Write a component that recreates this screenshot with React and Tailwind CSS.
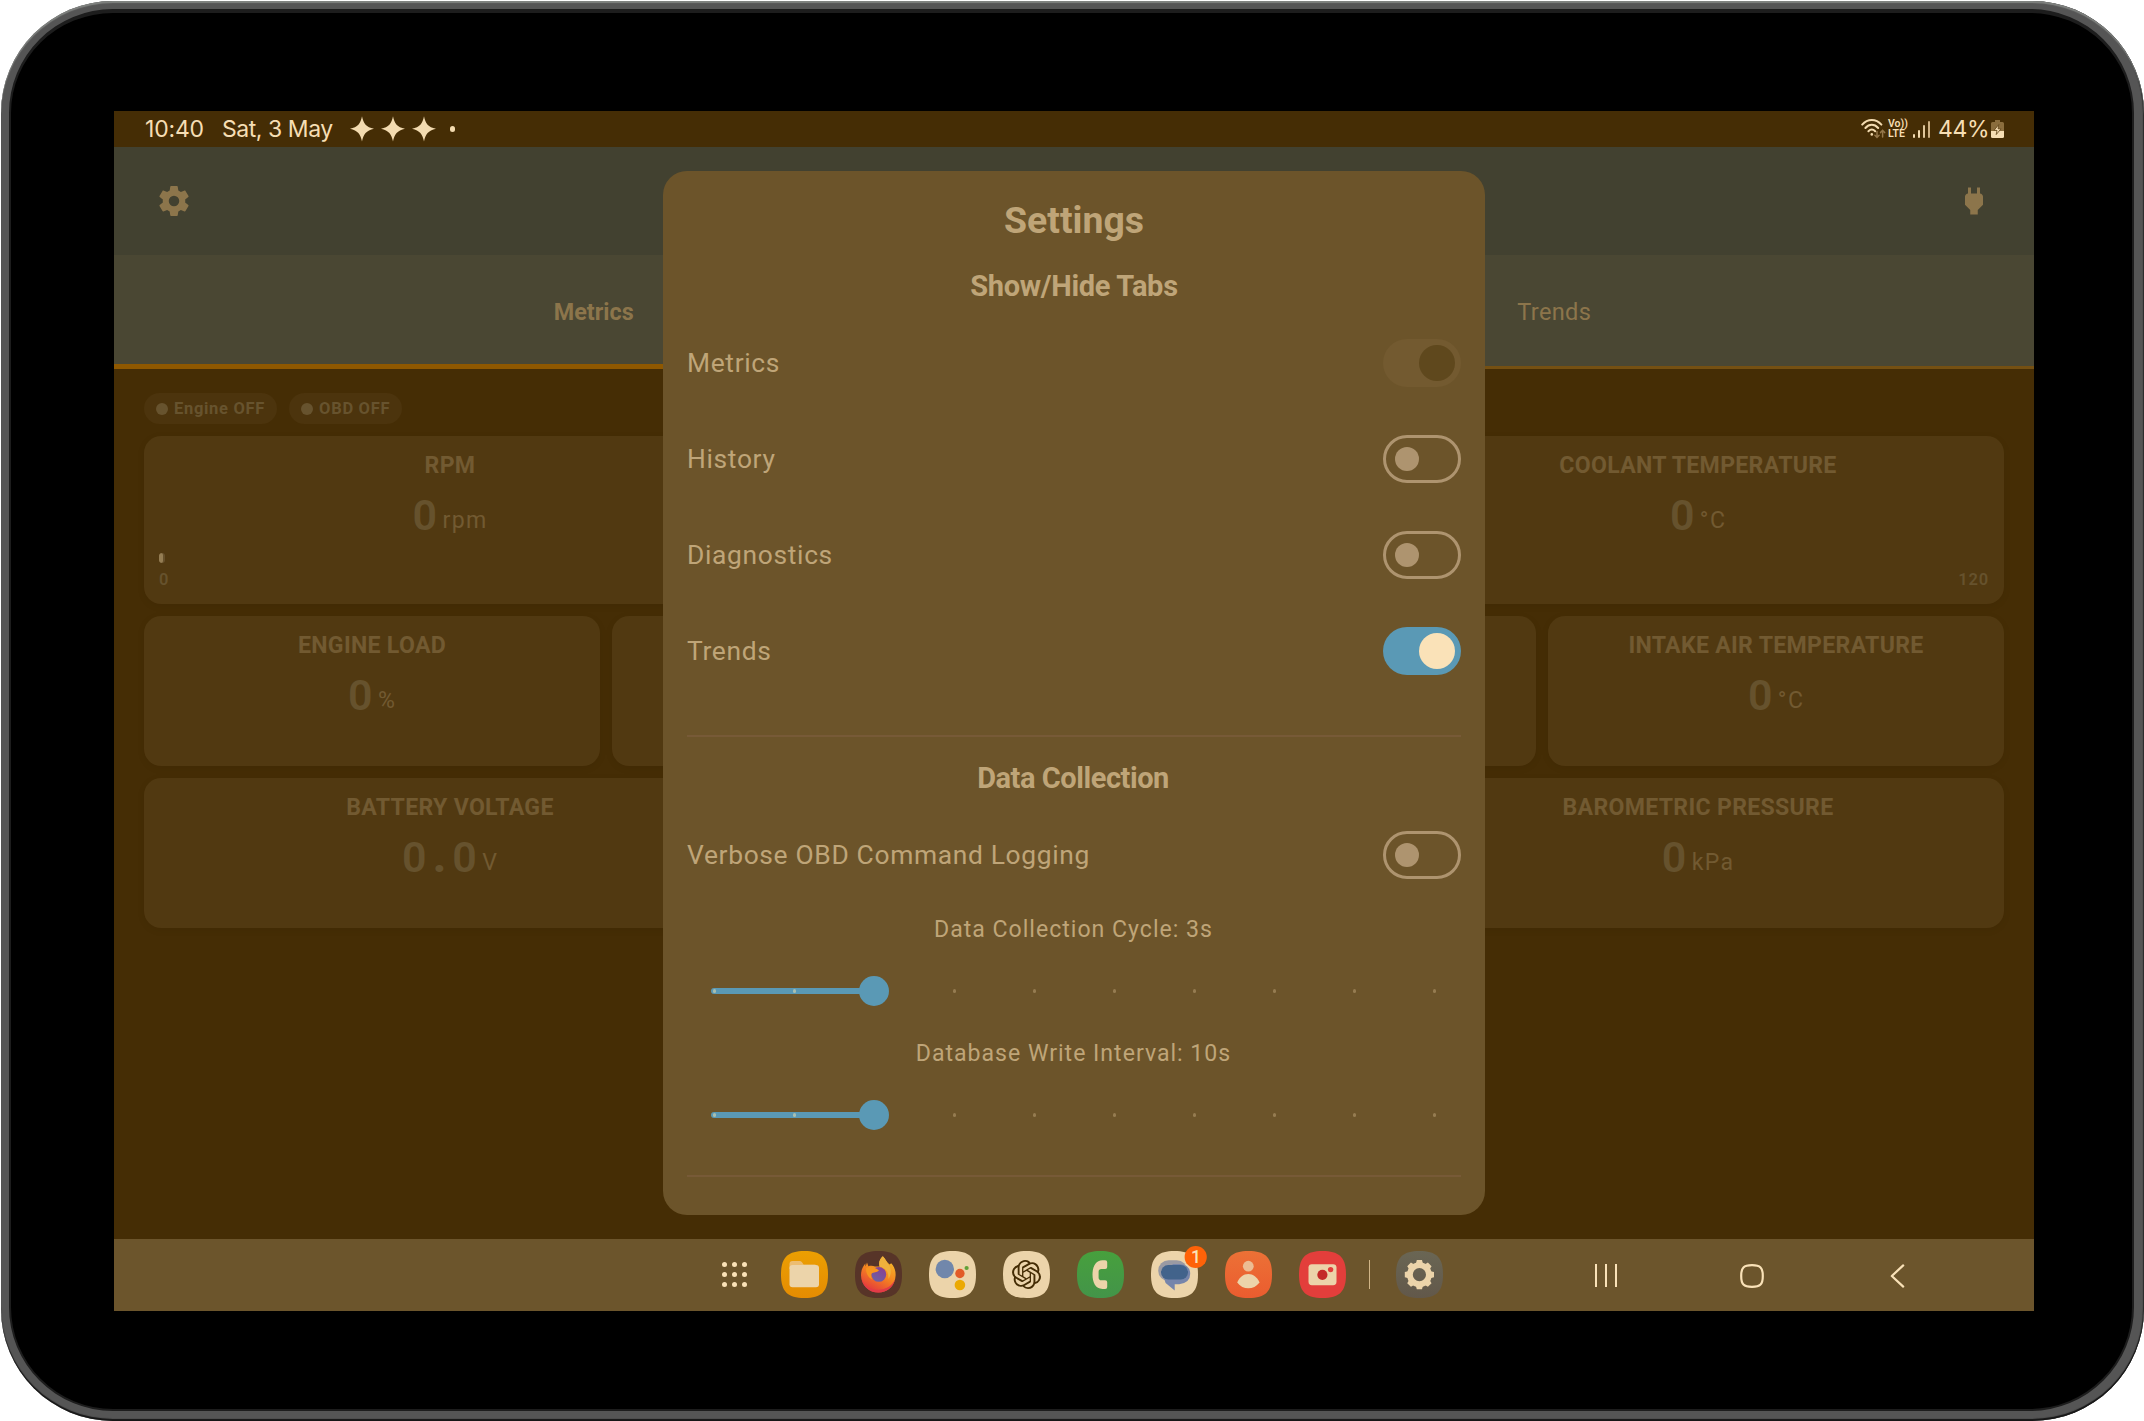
import React from "react";

const COG =
  "M12,15.5A3.5,3.5 0 0,1 8.5,12A3.5,3.5 0 0,1 12,8.5A3.5,3.5 0 0,1 15.5,12A3.5,3.5 0 0,1 12,15.5M19.43,12.97C19.47,12.65 19.5,12.33 19.5,12C19.5,11.67 19.47,11.34 19.43,11L21.54,9.37C21.73,9.22 21.78,8.95 21.66,8.73L19.66,5.27C19.54,5.05 19.27,4.96 19.05,5.05L16.56,6.05C16.04,5.66 15.5,5.32 14.87,5.07L14.5,2.42C14.46,2.18 14.25,2 14,2H10C9.75,2 9.54,2.18 9.5,2.42L9.13,5.07C8.5,5.32 7.96,5.66 7.44,6.05L4.95,5.05C4.73,4.96 4.46,5.05 4.34,5.27L2.34,8.73C2.21,8.95 2.27,9.22 2.46,9.37L4.57,11C4.53,11.34 4.5,11.67 4.5,12C4.5,12.33 4.53,12.65 4.57,12.97L2.46,14.63C2.27,14.78 2.21,15.05 2.34,15.27L4.34,18.73C4.46,18.95 4.73,19.03 4.95,18.95L7.44,17.94C7.96,18.34 8.5,18.68 9.13,18.93L9.5,21.58C9.54,21.82 9.75,22 10,22H14C14.25,22 14.46,21.82 14.5,21.58L14.87,18.93C15.5,18.67 16.04,18.34 16.56,17.94L19.05,18.95C19.27,19.03 19.54,18.95 19.66,18.73L21.66,15.27C21.78,15.05 21.73,14.78 21.54,14.63L19.43,12.97Z";

const PLUG =
  "M16,7V3H14V7H10V3H8V7H8C7,7 6,8 6,9V14.5L9.5,18V21H14.5V18L18,14.5V9C18,8 17,7 16,7Z";

const KNOT =
  "M22.2819 9.8211a5.9847 5.9847 0 0 0-.5157-4.9108 6.0462 6.0462 0 0 0-6.5098-2.9A6.0651 6.0651 0 0 0 4.9807 4.1818a5.9847 5.9847 0 0 0-3.9977 2.9 6.0462 6.0462 0 0 0 .7427 7.0966 5.98 5.98 0 0 0 .511 4.9107 6.051 6.051 0 0 0 6.5146 2.9001A5.9847 5.9847 0 0 0 13.2599 24a6.0557 6.0557 0 0 0 5.7718-4.2058 5.9894 5.9894 0 0 0 3.9977-2.9001 6.0557 6.0557 0 0 0-.7475-7.0729zm-9.022 12.6081a4.4755 4.4755 0 0 1-2.8764-1.0408l.1419-.0804 4.7783-2.7582a.7948.7948 0 0 0 .3927-.6813v-6.7369l2.02 1.1686a.071.071 0 0 1 .038.052v5.5826a4.504 4.504 0 0 1-4.4945 4.4944zm-9.6607-4.1254a4.4708 4.4708 0 0 1-.5346-3.0137l.142.0852 4.783 2.7582a.7712.7712 0 0 0 .7806 0l5.8428-3.3685v2.3324a.0804.0804 0 0 1-.0332.0615L9.74 19.9502a4.4992 4.4992 0 0 1-6.1408-1.6464zM2.3408 7.8956a4.485 4.485 0 0 1 2.3655-1.9728V11.6a.7664.7664 0 0 0 .3879.6765l5.8144 3.3543-2.0201 1.1685a.0757.0757 0 0 1-.071 0l-4.8303-2.7865A4.504 4.504 0 0 1 2.3408 7.872zm16.5963 3.8558L13.1038 8.364 15.1192 7.2a.0757.0757 0 0 1 .071 0l4.8303 2.7913a4.4944 4.4944 0 0 1-.6765 8.1042v-5.6772a.79.79 0 0 0-.407-.667zm2.0107-3.0231l-.142-.0852-4.7735-2.7818a.7759.7759 0 0 0-.7854 0L9.409 9.2297V6.8974a.0662.0662 0 0 1 .0284-.0615l4.8303-2.7866a4.4992 4.4992 0 0 1 6.6802 4.66zM8.3065 12.863l-2.02-1.1638a.0804.0804 0 0 1-.038-.0567V6.0742a4.4992 4.4992 0 0 1 7.3757-3.4537l-.142.0805L8.704 5.459a.7948.7948 0 0 0-.3927.6813zm1.0976-2.3654l2.602-1.4998 2.6069 1.4998v2.9994l-2.5974 1.4997-2.6067-1.4997Z";

function Sparkle() {
  return (
    <svg className="h-[26px] w-[26px]" viewBox="-13 -13 26 26">
      <path
        d="M0-12.8C1.4-5.4 4.2-2 12-.2C4.2 1.8 1.4 5.2 0 12.5C-1.4 5.2-4.2 1.8-12-.2C-4.2-2-1.4-5.4 0-12.8Z"
        fill="#f3dbb0"
      />
    </svg>
  );
}

function StatusBar() {
  return (
    <div className="flex h-9 shrink-0 items-center bg-[#452d05] pr-[30px] pl-[31px] font-['Inter',sans-serif] text-[23px] leading-9 text-[#f6deb4]">
      <span className="w-[77px] tracking-[-0.2px] whitespace-nowrap">10:40</span>
      <span className="w-[127px] tracking-[-0.45px] whitespace-nowrap">Sat, 3 May</span>
      <div className="flex items-center gap-[5px]">
        <Sparkle />
        <Sparkle />
        <Sparkle />
      </div>
      <span className="ml-[13px] h-1.5 w-[5px] rounded-full bg-[#f3dbb0]" />
      <div className="ml-auto flex items-center">
        <svg className="h-[22px] w-[25px]" viewBox="0 0 25 22" fill="none" stroke="#f3dbb0" strokeWidth="2" strokeLinecap="round">
          <path d="M1.2 6.6C6.6 .4 15 .4 20.4 6.6" />
          <path d="M4.4 10C8.2 5.8 13.4 5.8 17.2 10" />
          <path d="M7.4 13.2C9.6 11 12 11 14.2 13.2" />
          <circle cx="10.8" cy="16.4" r="1.3" fill="#f3dbb0" stroke="none" />
          <path d="M16 13.5V19M13.9 17.2L16 19.4L18.1 17.2" stroke="#93764a" strokeWidth="1.5" />
          <path d="M21.6 19V12.6M19.5 14.6L21.6 12.4L23.7 14.6" stroke="#93764a" strokeWidth="1.5" />
        </svg>
        <div className="ml-[2px] flex w-[20px] flex-col font-['Roboto'] text-[10.5px] leading-[10.5px] font-semibold">
          <span className="whitespace-nowrap">Vo))</span>
          <span className="whitespace-nowrap">LTE</span>
        </div>
        <div className="ml-[5px] flex h-[17px] items-end gap-[3px]">
          <span className="h-[4px] w-[2px] rounded-full bg-[#f3dbb0]" />
          <span className="h-[8px] w-[2px] rounded-full bg-[#f3dbb0]" />
          <span className="h-[13px] w-[2px] rounded-full bg-[#e0c79b]" />
          <span className="h-[17px] w-[2px] rounded-full bg-[#cdb083]" />
        </div>
        <span className="ml-[8px] w-[51px] tracking-[-0.4px] whitespace-nowrap">44%</span>
        <svg className="ml-[2px] h-[18px] w-[13px]" viewBox="0 0 13 18">
          <path d="M4 0H9V2H11.5Q13 2 13 3.5V11H0V3.5Q0 2 1.5 2H4Z" fill="#8a6d3d" />
          <path d="M0 11H13V16.5Q13 18 11.5 18H1.5Q0 18 0 16.5Z" fill="#f6deb4" />
          <path d="M7.8 4.5L3 10.4H6L5.2 14.6L10 8.8H7Z" fill="#f6deb4" stroke="#5e4316" strokeWidth=".8" />
        </svg>
      </div>
    </div>
  );
}

function Tab({ label, active }) {
  return (
    <div
      className={
        active
          ? "flex flex-1 items-center justify-center border-b-[5px] border-[#8f5800] pt-[6px] text-[23.4px] font-bold"
          : "flex flex-1 items-center justify-center border-b-[3px] border-[#755012] pt-[4px] pl-px text-[23.6px] tracking-[0.3px]"
      }
    >
      {label}
    </div>
  );
}

function Pill({ label }) {
  return (
    <div className="flex h-[31px] items-center rounded-full bg-[#4c340d] pr-[12px] pl-3 text-[16.5px] font-bold tracking-[0.7px] whitespace-nowrap text-[#67532e]">
      <span className="mt-px mr-1.5 h-3 w-3 rounded-full bg-[#67532e]" />
      <span className="pt-px">{label}</span>
    </div>
  );
}

function Card({ title, value, unit, min, max, height }) {
  return (
    <div
      className={
        (height === "tall" ? "h-[168px]" : "h-[150px]") +
        " flex min-w-0 flex-1 flex-col items-center rounded-[17px] bg-[#513911] px-4 pt-[15px] shadow-[0_2px_8px_rgba(0,0,0,0.06)]"
      }
    >
      <div className="text-[23.1px] leading-[30px] font-bold tracking-[0.3px] whitespace-nowrap text-[#725a31]">{title}</div>
      <div className="mt-[5px] flex h-[56px] items-baseline leading-[56px]">
        <span className="flex translate-y-px text-[43px] font-semibold text-[#66522d]">
          {value.split("").map((c, i) => (
            <span key={i} className={c === "." ? "w-[25.2px] text-center font-black" : "w-[25.2px] text-center"}>
              {c}
            </span>
          ))}
        </span>
        <span className="ml-[5px] -translate-y-px text-[23.1px] tracking-[1.4px] text-[#725a31]">{unit}</span>
      </div>
      {height === "tall" && (
        <div className="mt-[11px] flex w-full flex-col">
          <div className={min ? "ml-[-1px] h-[10px] w-1.5 overflow-hidden rounded-full bg-[#66502b]" : "h-[10px]"}>
            {min && <div className="h-[10px] w-[3.5px] rounded-full bg-[#947d53]" />}
          </div>
          <div className="mt-[7px] flex justify-between text-[16.5px] leading-5 font-semibold tracking-[0.8px] text-[#66522d]">
            <span className="ml-[-1px]">{min}</span>
            <span className="mr-[-1px]">{max}</span>
          </div>
        </div>
      )}
    </div>
  );
}

function Toggle({ state }) {
  if (state === "off")
    return (
      <div className="flex h-12 w-[78px] items-center rounded-full border-[3px] border-[#ae946f] pl-[9px]">
        <span className="h-6 w-6 rounded-full bg-[#ae946f]" />
      </div>
    );
  return (
    <div
      className={
        (state === "on" ? "bg-[#5a99b5]" : "bg-[#735a30]") + " flex h-12 w-[78px] items-center justify-end rounded-full pr-1.5"
      }
    >
      <span className={(state === "on" ? "bg-[#fae2b8]" : "bg-[#5f481d]") + " h-9 w-9 rounded-full"} />
    </div>
  );
}

function SettingRow({ label, state }) {
  return (
    <div className="flex h-24 shrink-0 items-center justify-between">
      <span className="pt-0.5 text-[26.4px] tracking-[0.66px] text-[#bfa578]">{label}</span>
      <Toggle state={state} />
    </div>
  );
}

function Slider({ label }) {
  return (
    <>
      <div className="mt-px pr-px text-center text-[23.1px] leading-9 tracking-[0.99px] text-[#bfa578]">{label}</div>
      <div className="relative mt-[13px] mb-[14px] flex h-[60px] shrink-0 items-center px-6">
        <div className="flex h-1.5 w-[163px] rounded-full bg-[#5a99b5]" />
        <div className="absolute inset-x-[25.5px] top-[28px] flex justify-between">
          {[0, 1, 2, 3, 4, 5, 6, 7, 8, 9].map((i) => (
            <span key={i} className={(i < 3 ? "bg-[#a9bfb0]" : "bg-[#957c51]") + " h-[3.5px] w-[3px] rounded-full"} />
          ))}
        </div>
        <span className="relative -ml-[15px] h-[30px] w-[30px] rounded-full bg-[#5a99b5]" />
      </div>
    </>
  );
}

function SettingsDialog() {
  return (
    <div className="absolute top-[60px] left-[549px] flex h-[1044px] w-[822px] flex-col overflow-hidden rounded-3xl bg-[#6c542a] px-6 pt-6">
      <h1 className="text-center text-[37.4px] leading-[50px] font-bold text-[#bfa578]">Settings</h1>
      <h2 className="mt-[21px] mb-[9px] text-center text-[29px] leading-10 font-bold tracking-[-0.3px] text-[#bfa578]">Show/Hide Tabs</h2>
      <SettingRow label="Metrics" state="disabled" />
      <SettingRow label="History" state="off" />
      <SettingRow label="Diagnostics" state="off" />
      <SettingRow label="Trends" state="on" />
      <div className="mt-9 h-0.5 shrink-0 bg-[#775a37]" />
      <h2 className="mt-[21px] mb-[9px] pr-[2px] text-center text-[29px] leading-10 font-bold tracking-[-0.45px] text-[#bfa578]">Data Collection</h2>
      <SettingRow label="Verbose OBD Command Logging" state="off" />
      <div className="h-2 shrink-0" />
      <Slider label="Data Collection Cycle: 3s" />
      <Slider label="Database Write Interval: 10s" />
      <div className="mt-4 h-0.5 shrink-0 bg-[#775a37]" />
    </div>
  );
}

function AppIcon({ fill, children }) {
  return (
    <svg className="h-[47px] w-[47px] shrink-0 overflow-visible" viewBox="0 0 47 47">
      <path d="M23.5 0C40.5 0 47 6.5 47 23.5S40.5 47 23.5 47 0 40.5 0 23.5 6.5 0 23.5 0Z" fill={fill} />
      {children}
    </svg>
  );
}

const TEETH = [0, 45, 90, 135, 180, 225, 270, 315];

function TaskBar() {
  return (
    <div className="flex h-[72px] shrink-0 items-center bg-[#6c552c] pb-px pl-[607px]">
      <svg className="mr-[33px] h-[27px] w-[27px]" viewBox="-13.5 -13.5 27 27" fill="#fae2b8">
        {[-10, 0, 10].map((y) => [-10, 0, 10].map((x) => <circle key={x + "," + y} cx={x} cy={y} r="2.5" />))}
      </svg>
      <svg className="h-0 w-0">
        <defs>
          <linearGradient id="files" x1="0" y1="0" x2="0" y2="1">
            <stop offset="0" stopColor="#eb9f02" />
            <stop offset="1" stopColor="#e58c02" />
          </linearGradient>
          <linearGradient id="fox" x1="0.8" y1="0" x2="0.3" y2="1">
            <stop offset="0" stopColor="#f3c02c" />
            <stop offset="0.5" stopColor="#f5851f" />
            <stop offset="1" stopColor="#e2343f" />
          </linearGradient>
          <linearGradient id="globe" x1="0.8" y1="0" x2="0.2" y2="1">
            <stop offset="0" stopColor="#8a3f92" />
            <stop offset="1" stopColor="#6a62a5" />
          </linearGradient>
          <linearGradient id="phone" x1="0" y1="0" x2="0" y2="1">
            <stop offset="0" stopColor="#47a03d" />
            <stop offset="1" stopColor="#439449" />
          </linearGradient>
          <linearGradient id="contacts" x1="0" y1="0" x2="0" y2="1">
            <stop offset="0" stopColor="#ec7136" />
            <stop offset="1" stopColor="#eb5c2f" />
          </linearGradient>
          <linearGradient id="system" x1="0" y1="0" x2="0" y2="1">
            <stop offset="0" stopColor="#6a6654" />
            <stop offset="1" stopColor="#62584a" />
          </linearGradient>
        </defs>
      </svg>
      <div className="flex gap-[27px]">
        <AppIcon fill="url(#files)">
          <path d="M8.5 18V13Q8.5 10 11.5 10H18.5Q20 10 21 11.2L22.6 13.5H34.5V18Z" fill="#ecbd72" />
          <rect x="8.5" y="14" width="29.5" height="22.3" rx="3" fill="#ecd4aa" />
        </AppIcon>
        <AppIcon fill="#573428">
          <path
            d="M27.8 5.2C30.6 8 31.5 10.8 34.5 13.4L36.2 12.2C39.6 16 40.8 20 40.6 24.5C40.2 34 32.8 41.6 23.4 41.6C13.8 41.6 6 34 6 24.2C6 19.6 7.6 15.8 10.3 12.6L10.6 15.4L12 11.6L13.4 15.2C15.6 14.4 18 14.6 20 15.6L24.6 15.4C23.2 11.4 25.2 7.6 27.8 5.2Z"
            fill="url(#fox)"
          />
          <path d="M27.8 5.2C31 8.6 31.4 11.2 34.2 14.6C36.6 18.4 36.4 24 33.4 28C33.8 22 32 17.4 24.6 15.4C23.2 11.4 25.2 7.6 27.8 5.2Z" fill="#efb13c" />
          <circle cx="23.8" cy="23.4" r="7.4" fill="url(#globe)" />
          <path d="M11 17.4C15 14.8 20 16.4 24 19.4C21.6 21.6 18.6 21 16.8 22.2C15.6 23.6 15.8 26.4 17.4 28.6C13.4 26.6 10.8 22.2 11 17.4Z" fill="#f7931e" />
          <path d="M6.6 28C9.4 35.4 16 38.8 23.4 38.8C31 38.8 37.4 34.6 39.8 28.8C38.4 36.4 31.6 41.6 23.4 41.6C15.2 41.6 8.4 36.2 6.6 28Z" fill="#e23b47" />
        </AppIcon>
        <AppIcon fill="#ecd4aa">
          <circle cx="15.8" cy="18" r="9.2" fill="#7187ab" />
          <circle cx="30.9" cy="22.5" r="4.7" fill="#e25b28" />
          <circle cx="30.9" cy="34" r="5.3" fill="#eba903" />
          <circle cx="37.6" cy="17" r="2.1" fill="#61a137" />
        </AppIcon>
        <AppIcon fill="#ecd4aa">
          <path d={KNOT} fill="#452d05" transform="translate(9 9) scale(1.21)" />
        </AppIcon>
        <AppIcon fill="url(#phone)">
          <path
            d="M25.5 9.2H28.2Q30.2 9.2 30.2 11.2V16Q30.2 18 28.2 18H24.4Q21.6 18 21.6 20.8V26.4Q21.6 29.2 24.4 29.2H28.2Q30.2 29.2 30.2 31.2V36Q30.2 38 28.2 38H25.5C18.5 38 15.5 31.5 15.5 23.6S18.5 9.2 25.5 9.2Z"
            fill="#ecd4aa"
          />
        </AppIcon>
        <AppIcon fill="#ecd4aa">
          <rect x="7.2" y="9.2" width="29" height="21" rx="10.5" fill="#9a9aa3" />
          <path d="M22 13H28.2Q39.2 13.6 39.2 22.8T28.2 33.2H23.7V39.6L14.6 32L12 24Z" fill="#7685ab" />
          <rect x="10" y="14" width="27" height="14.6" rx="7.3" fill="#42638b" />
          <circle cx="44.7" cy="6" r="11.1" fill="#ff6208" />
          <text x="44.9" y="12.3" textAnchor="middle" fontFamily="Roboto" fontSize="17.5" fontWeight="500" fill="#fae2b8">
            1
          </text>
        </AppIcon>
        <AppIcon fill="url(#contacts)">
          <circle cx="23.3" cy="15.2" r="5.4" fill="#ecbd93" />
          <path d="M12.2 31.5C14.6 26 18.4 23 23.3 23S32 26 34.6 31.5C31.4 35.6 27.6 37.2 23.3 37.2S15.2 35.6 12.2 31.5Z" fill="#ecd4aa" />
        </AppIcon>
        <AppIcon fill="#e33e3b">
          <rect x="9.5" y="13.2" width="28" height="21" rx="3.4" fill="#ecd4aa" />
          <circle cx="23.4" cy="23.8" r="5.1" fill="#c42a28" />
          <circle cx="31.6" cy="18.6" r="2.7" fill="#e33e3b" />
        </AppIcon>
      </div>
      <span className="ml-[23px] h-[29px] w-px bg-[#d1b587]" />
      <div className="ml-[26px] flex">
        <AppIcon fill="url(#system)">
          <g fill="#ecd4aa" transform="translate(23.4 23.7)">
            {TEETH.map((a) => (
              <path key={a} d="M-2.6-14.6H2.6L3.8-10H-3.8Z" transform={"rotate(" + a + ")"} strokeLinejoin="round" />
            ))}
            <path d="M0-12.4A12.4 12.4 0 1 1 0 12.4A12.4 12.4 0 1 1 0-12.4ZM0-6.6A6.6 6.6 0 1 0 0 6.6A6.6 6.6 0 1 0 0-6.6Z" fillRule="evenodd" />
          </g>
        </AppIcon>
      </div>
      <div className="ml-auto flex items-center pt-[2px] pr-[129px]">
        <div className="flex gap-2">
          <span className="h-[23px] w-[2px] bg-[#fae2b8]" />
          <span className="h-[23px] w-[2px] bg-[#fae2b8]" />
          <span className="h-[23px] w-[2px] bg-[#fae2b8]" />
        </div>
        <svg className="ml-[123px] h-6 w-6" viewBox="0 0 24 24" fill="none" stroke="#fae2b8" strokeWidth="2.2">
          <path d="M12 1.2C20.4 1.2 22.8 3.6 22.8 12S20.4 22.8 12 22.8 1.2 20.4 1.2 12 3.6 1.2 12 1.2Z" />
        </svg>
        <svg className="ml-[126px] h-6 w-[15px]" viewBox="0 0 15 24" fill="none" stroke="#fae2b8" strokeWidth="2.2" strokeLinecap="round" strokeLinejoin="round">
          <path d="M13.2 1.4L1.8 12L13.2 22.6" />
        </svg>
      </div>
    </div>
  );
}

export default function App() {
  return (
    <div className="h-[1421px] w-[2144px] overflow-hidden bg-white pt-px pl-px font-['Roboto',sans-serif]">
      <div className="h-[1420px] w-[2143px] rounded-[112px] bg-[#555555] p-2 pr-[10px] pb-[10px] shadow-[inset_0_2px_1px_#808380,inset_0_-2px_1px_#161616,inset_-1px_0_1px_#222222]">
        <div className="h-[1402px] w-[2125px] rounded-[104px] border-4 border-r-2 border-b-2 border-l-2 border-[#1d1d1d] bg-black pt-[98px] pl-[103px]">
          <div className="relative flex h-[1200px] w-[1920px] flex-col bg-[#452d05]">
            <StatusBar />
            <div className="flex h-[108px] shrink-0 items-center justify-between bg-[#424130] px-[42px]">
              <svg className="h-9 w-9" viewBox="0 0 24 24" fill="#8c754b">
                <path d={COG} />
              </svg>
              <svg className="h-9 w-9" viewBox="0 0 24 24" fill="#8c754b">
                <path d={PLUG} />
              </svg>
            </div>
            <div className="flex h-[114px] shrink-0 bg-[#4a4733] text-[#8c754b]">
              <Tab label="Metrics" active />
              <Tab label="Trends" />
            </div>
            <div className="flex flex-1 flex-col gap-3 px-[30px] pt-6">
              <div className="flex gap-3">
                <Pill label="Engine OFF" />
                <Pill label="OBD OFF" />
              </div>
              <div className="flex gap-3">
                <Card height="tall" title="RPM" value="0" unit="rpm" min="0" />
                <Card height="tall" title="" value="" unit="" />
                <Card height="tall" title="COOLANT TEMPERATURE" value="0" unit="°C" max="120" />
              </div>
              <div className="flex gap-3">
                <Card title="ENGINE LOAD" value="0" unit="%" />
                <Card title="" value="" unit="" />
                <Card title="" value="" unit="" />
                <Card title="INTAKE AIR TEMPERATURE" value="0" unit="°C" />
              </div>
              <div className="flex gap-3">
                <Card title="BATTERY VOLTAGE" value="0.0" unit="V" />
                <Card title="" value="" unit="" />
                <Card title="BAROMETRIC PRESSURE" value="0" unit="kPa" />
              </div>
            </div>
            <TaskBar />
            <SettingsDialog />
          </div>
        </div>
      </div>
    </div>
  );
}
